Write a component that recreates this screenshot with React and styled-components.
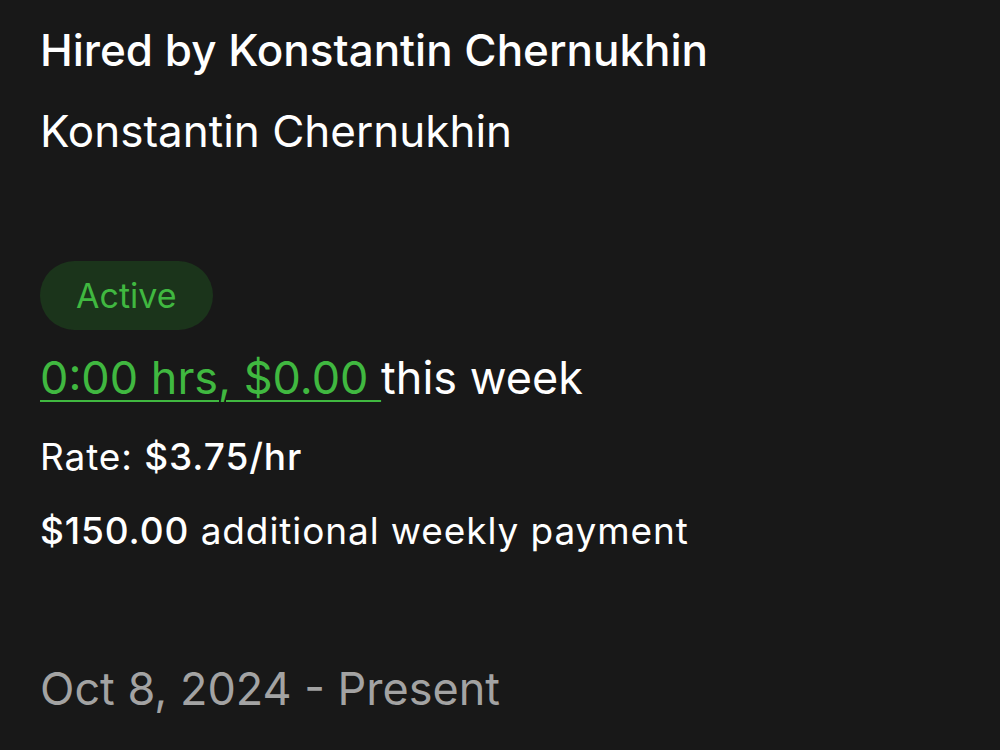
import React from 'react';
import styled, { createGlobalStyle } from 'styled-components';

const GlobalStyle = createGlobalStyle`
  html, body {
    margin: 0;
    padding: 0;
    background: #181818;
  }
  body {
    font-family: Inter, "Liberation Sans", Arial, sans-serif;
    color: #ffffff;
  }
`;

const Card = styled.div`
  box-sizing: border-box;
  width: 1000px;
  height: 750px;
  padding: 24px 40px 0;
  background: #181818;
  display: flex;
  flex-direction: column;
  align-items: flex-start;
`;

const Title = styled.h1`
  margin: 0;
  font-size: 44px;
  font-weight: 500;
  line-height: 52px;
`;

const Client = styled.div`
  margin-top: 29px;
  font-size: 44px;
  line-height: 52px;
`;

const Status = styled.span`
  margin-top: 104px;
  height: 69px;
  padding: 0 36px;
  display: inline-flex;
  align-items: center;
  border-radius: 35px;
  background: #1b341b;
  color: #40b840;
  font-size: 34px;
`;

const Hours = styled.div`
  margin-top: 22px;
  font-size: 45px;
  line-height: 52px;
`;

const HoursLink = styled.a`
  color: #40b840;
  text-decoration: underline;
  text-decoration-thickness: 2px;
  text-underline-offset: 6px;
  cursor: pointer;
`;

const Detail = styled.div`
  margin-top: ${(p) => p.$gap}px;
  font-size: 37px;
  line-height: 44px;
  letter-spacing: 0.9px;
`;

const Strong = styled.span`
  font-weight: 500;
`;

const Period = styled.div`
  margin-top: 110px;
  font-size: 45px;
  line-height: 52px;
  color: #a3a3a3;
`;

export default function App() {
  return (
    <>
      <GlobalStyle />
      <Card>
        <Title>Hired by Konstantin Chernukhin</Title>
        <Client>Konstantin Chernukhin</Client>
        <Status>Active</Status>
        <Hours>
          <HoursLink>0:00 hrs, $0.00 </HoursLink>this week
        </Hours>
        <Detail $gap={31}>
          Rate: <Strong>$3.75/hr</Strong>
        </Detail>
        <Detail $gap={30}>
          <Strong>$150.00</Strong> additional weekly payment
        </Detail>
        <Period>Oct 8, 2024 - Present</Period>
      </Card>
    </>
  );
}
